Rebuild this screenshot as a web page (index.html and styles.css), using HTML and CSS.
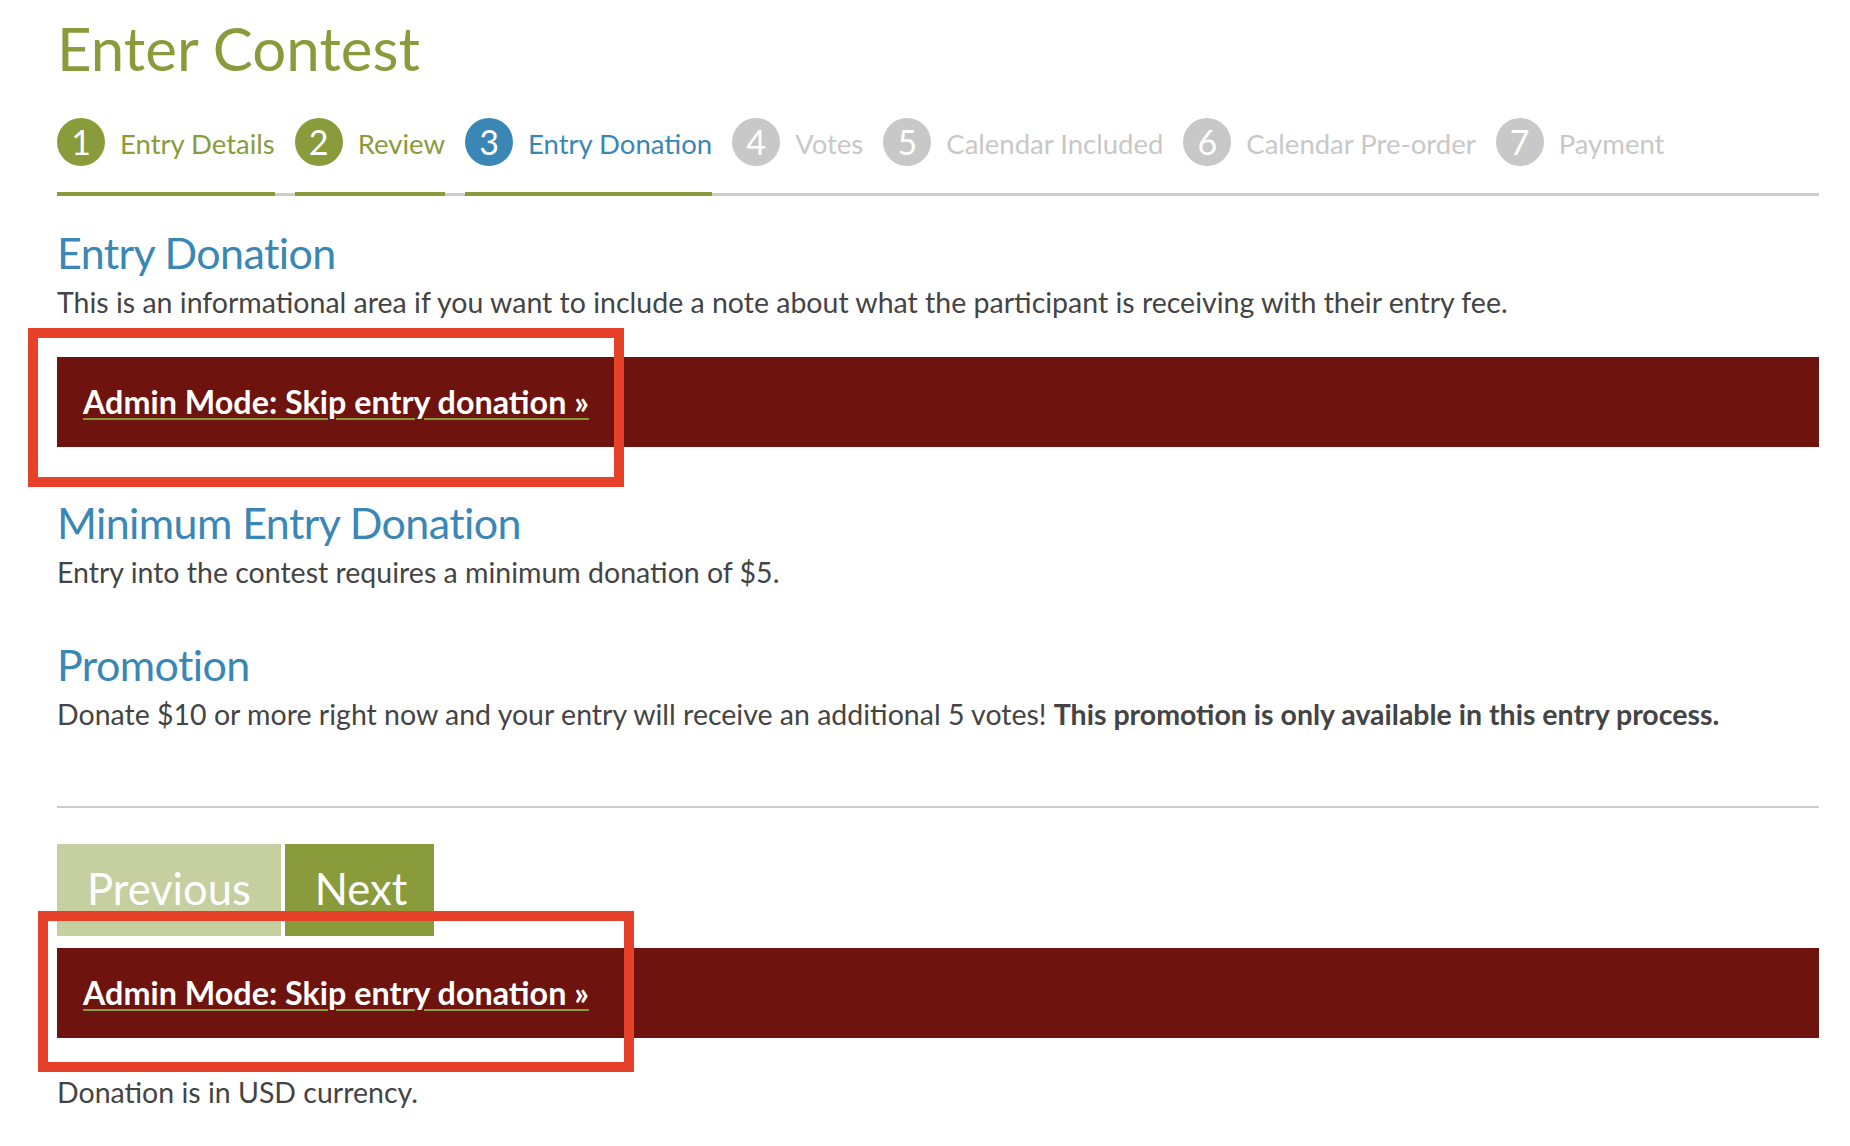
FILE: index.html
```html
<!DOCTYPE html>
<html lang="en">
<head>
  <meta charset="UTF-8">
  <meta name="viewport" content="width=device-width, initial-scale=1.0">
  <title>Enter Contest</title>
  <link rel="stylesheet" href="styles.css">
</head>
<body>
  <div class="page">
    <h1 class="page-title">Enter Contest</h1>

    <ol class="steps">
      <li class="step done"><span class="step-num">1</span><span class="step-label">Entry Details</span></li>
      <li class="step done"><span class="step-num">2</span><span class="step-label">Review</span></li>
      <li class="step active"><span class="step-num">3</span><span class="step-label">Entry Donation</span></li>
      <li class="step"><span class="step-num">4</span><span class="step-label">Votes</span></li>
      <li class="step"><span class="step-num">5</span><span class="step-label">Calendar Included</span></li>
      <li class="step"><span class="step-num">6</span><span class="step-label">Calendar Pre-order</span></li>
      <li class="step"><span class="step-num">7</span><span class="step-label">Payment</span></li>
    </ol>

    <section class="block first">
      <h2>Entry Donation</h2>
      <p>This is an informational area if you want to include a note about what the participant is receiving with their entry fee.</p>
    </section>

    <div class="admin-bar top">
      <a href="#">Admin Mode: Skip entry donation &raquo;</a>
      <span class="callout"></span>
    </div>

    <section class="block">
      <h2>Minimum Entry Donation</h2>
      <p>Entry into the contest requires a minimum donation of $5.</p>
    </section>

    <section class="block">
      <h2>Promotion</h2>
      <p>Donate $10 or more right now and your entry will receive an additional 5 votes! <strong>This promotion is only available in this entry process.</strong></p>
    </section>

    <hr class="divider">

    <div class="nav-buttons">
      <button class="btn prev" type="button">Previous</button>
      <button class="btn next" type="submit">Next</button>
    </div>

    <div class="admin-bar bottom">
      <a href="#">Admin Mode: Skip entry donation &raquo;</a>
      <span class="callout"></span>
    </div>

    <p class="note">Donation is in USD currency.</p>
  </div>
</body>
</html>
```

FILE: styles.css
```css
body {
    margin: 0;
    background: #fff;
    font-family: Lato, "Open Sans", sans-serif;
    color: #444;
}

.page {
    margin: 0 31px 0 57px;
}

.page-title {
    margin: 12px 0 0;
    font-size: 60px;
    line-height: 72px;
    font-weight: normal;
    color: #8a9b3c;
}

/* progress steps */
.steps {
    display: flex;
    gap: 20px;
    margin: 34px 0 0;
    padding: 0;
    list-style: none;
    border-bottom: 3px solid #ccc;
}

.step {
    display: flex;
    align-items: center;
    gap: 15px;
    padding-bottom: 26px;
    margin-bottom: -3px;
    border-bottom: 4px solid transparent;
    color: #c8c8c8;
}

.step-num {
    width: 48px;
    height: 48px;
    border-radius: 50%;
    background: #c8c8c8;
    color: #fff;
    font-size: 34px;
    line-height: 48px;
    text-align: center;
}

.step-label {
    font-size: 27.5px;
    line-height: 33px;
    padding-top: 2px;
}

.step.done,
.step.active {
    border-bottom-color: #8a9b3c;
}

.step.done { color: #8a9b3c; }
.step.done .step-num { background: #8a9b3c; }

.step.active { color: #3a87b5; }
.step.active .step-num { background: #3a87b5; }

/* content blocks */
.block h2 {
    margin: 50px 0 6px;
    font-size: 43px;
    line-height: 52px;
    letter-spacing: -0.6px;
    font-weight: normal;
    color: #3a87b5;
}

.block.first h2 {
    margin-top: 31px;
}

.block p,
.note {
    margin: 0;
    font-size: 28.5px;
    line-height: 34px;
}

.block strong {
    font-weight: bold;
}

/* admin skip bar */
.admin-bar {
    position: relative;
    padding: 26px;
    background: #6e130d;
    font-size: 32.3px;
    line-height: 38px;
    font-weight: bold;
}

.admin-bar a {
    color: #fff;
    text-decoration: underline;
    text-decoration-color: #8a9b3c;
    text-decoration-thickness: 2px;
    text-underline-offset: 4px;
}

.admin-bar.top {
    margin-top: 38px;
}

.admin-bar.bottom {
    margin-top: 12px;
}

.callout {
    position: absolute;
    border: 10px solid #e8412a;
    width: 576px;
    pointer-events: none;
}

.admin-bar.top .callout {
    left: -29px;
    top: -29px;
    height: 139px;
}

.admin-bar.bottom .callout {
    left: -19px;
    top: -37px;
    height: 141px;
}

.divider {
    margin: 75px 0 0;
    border: 0;
    border-top: 2px solid #ccc;
}

.nav-buttons {
    display: flex;
    gap: 4px;
    margin-top: 36px;
}

.btn {
    padding: 19px 30px 23px;
    border: 0;
    border-radius: 0;
    font-family: inherit;
    font-size: 43.5px;
    line-height: 50px;
    color: #fff;
}

.btn.prev {
    background: #c5cfa0;
}

.btn.next {
    padding-right: 27px;
    background: #8a9b3c;
}

.note {
    margin-top: 37px;
}
```
